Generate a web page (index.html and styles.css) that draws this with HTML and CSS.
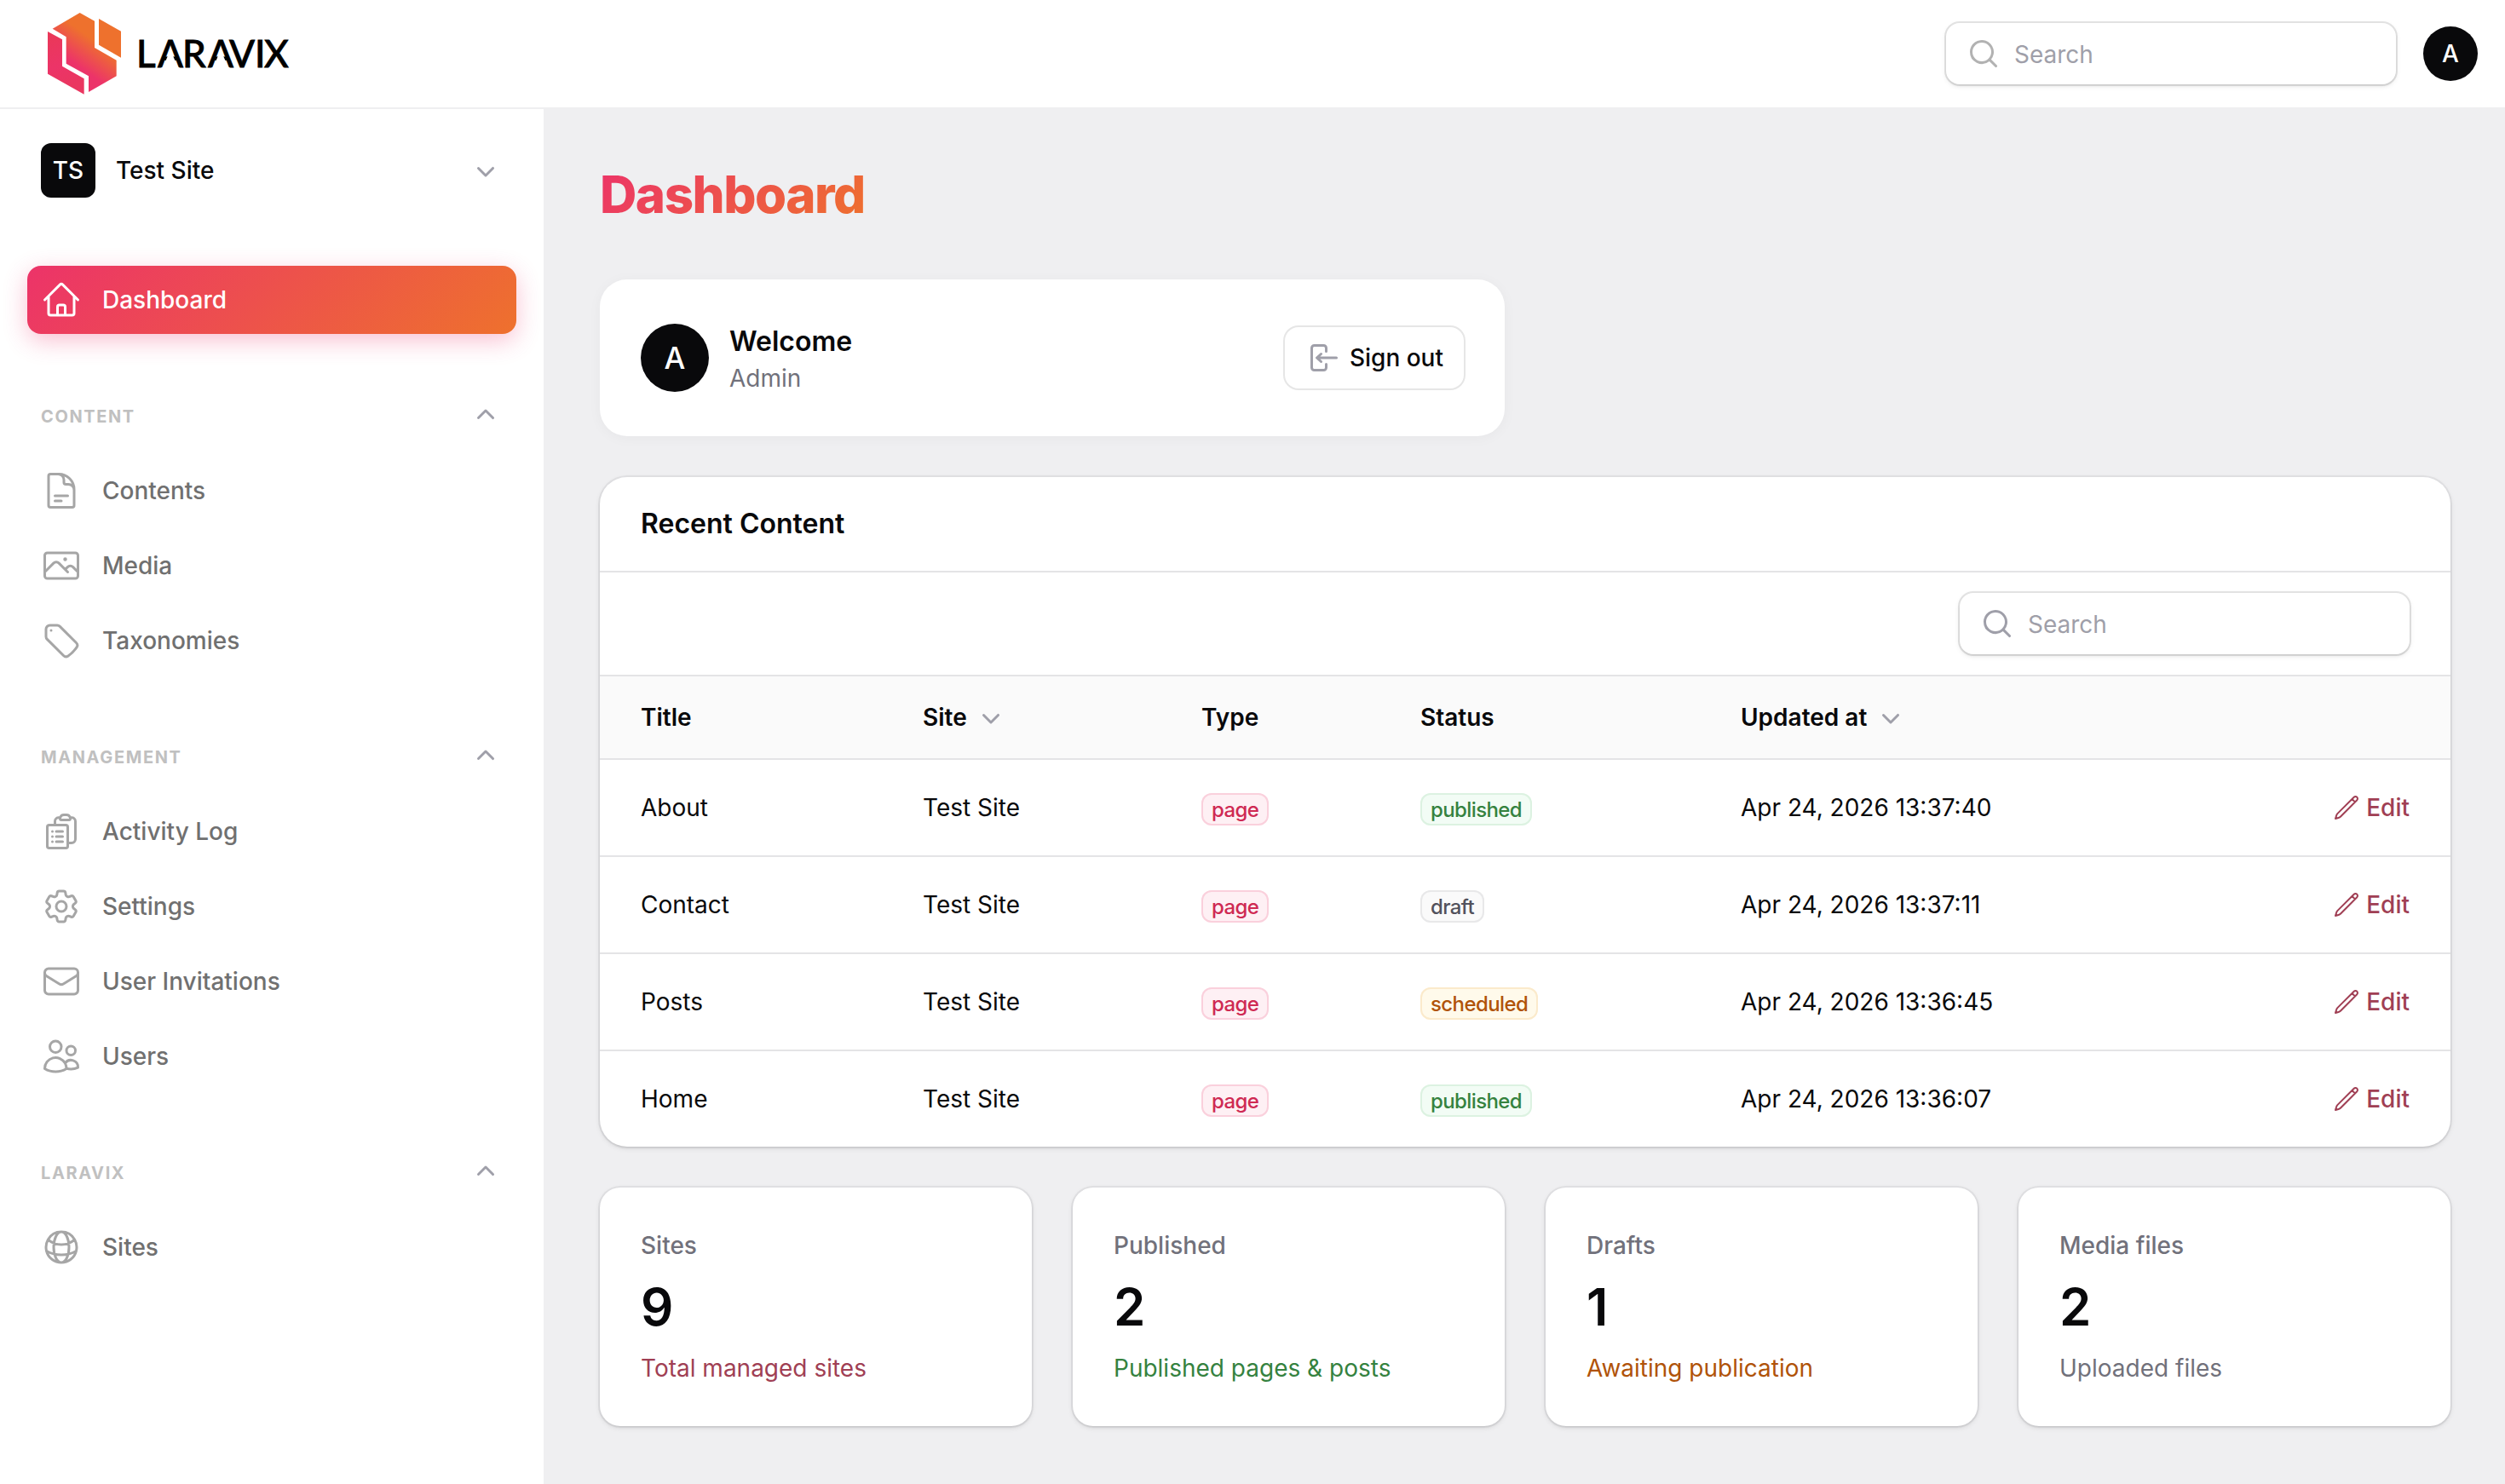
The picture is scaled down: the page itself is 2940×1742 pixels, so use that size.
FILE: index.html
```html
<!DOCTYPE html>
<html lang="en">
<head>
<meta charset="utf-8">
<title>Dashboard - Laravix</title>
<link rel="stylesheet" href="styles.css">
</head>
<body>
<svg class="sprite" aria-hidden="true">
  <symbol id="i-home" viewBox="0 0 24 24"><path d="m2.25 12 8.954-8.955c.44-.439 1.152-.439 1.591 0L21.75 12M4.5 9.75v10.125c0 .621.504 1.125 1.125 1.125H9.75v-4.875c0-.621.504-1.125 1.125-1.125h2.25c.621 0 1.125.504 1.125 1.125V21h4.125c.621 0 1.125-.504 1.125-1.125V9.75M8.25 21h8.25"/></symbol>
  <symbol id="i-document" viewBox="0 0 24 24"><path d="M19.5 14.25v-2.625a3.375 3.375 0 0 0-3.375-3.375h-1.5A1.125 1.125 0 0 1 13.5 7.125v-1.5a3.375 3.375 0 0 0-3.375-3.375H8.25m0 12.75h7.5m-7.5 3H12M10.5 2.25H5.625c-.621 0-1.125.504-1.125 1.125v17.25c0 .621.504 1.125 1.125 1.125h12.75c.621 0 1.125-.504 1.125-1.125V11.25a9 9 0 0 0-9-9Z"/></symbol>
  <symbol id="i-photo" viewBox="0 0 24 24"><path d="m2.25 15.75 5.159-5.159a2.25 2.25 0 0 1 3.182 0l5.159 5.159m-1.5-1.5 1.409-1.409a2.25 2.25 0 0 1 3.182 0l2.909 2.909m-18 3.75h16.5a1.5 1.5 0 0 0 1.5-1.5V6a1.5 1.5 0 0 0-1.5-1.5H3.75A1.5 1.5 0 0 0 2.25 6v12a1.5 1.5 0 0 0 1.5 1.5Zm10.5-11.25h.008v.008h-.008V8.25Zm.375 0a.375.375 0 1 1-.75 0 .375.375 0 0 1 .75 0Z"/></symbol>
  <symbol id="i-tag" viewBox="0 0 24 24"><path d="M9.568 3H5.25A2.25 2.25 0 0 0 3 5.25v4.318c0 .597.237 1.17.659 1.591l9.581 9.581c.699.699 1.78.872 2.607.33a18.095 18.095 0 0 0 5.223-5.223c.542-.827.369-1.908-.33-2.607L11.16 3.66A2.25 2.25 0 0 0 9.568 3Z"/><path d="M6 6h.008v.008H6V6Z"/></symbol>
  <symbol id="i-clipboard" viewBox="0 0 24 24"><path d="M9 12h3.75M9 15h3.75M9 18h3.75m3 .75H18a2.25 2.25 0 0 0 2.25-2.25V6.108c0-1.135-.845-2.098-1.976-2.192a48.424 48.424 0 0 0-1.123-.08m-5.801 0c-.065.21-.1.433-.1.664 0 .414.336.75.75.75h4.5a.75.75 0 0 0 .75-.75 2.25 2.25 0 0 0-.1-.664m-5.8 0A2.251 2.251 0 0 1 13.5 2.25H15c1.012 0 1.867.668 2.15 1.586m-5.8 0c-.376.023-.75.05-1.124.08C9.095 4.01 8.25 4.973 8.25 6.108V8.25m0 0H4.875c-.621 0-1.125.504-1.125 1.125v11.25c0 .621.504 1.125 1.125 1.125h9.75c.621 0 1.125-.504 1.125-1.125V9.375c0-.621-.504-1.125-1.125-1.125H8.25ZM6.75 12h.008v.008H6.75V12Zm0 3h.008v.008H6.75V15Zm0 3h.008v.008H6.75V18Z"/></symbol>
  <symbol id="i-cog" viewBox="0 0 24 24"><path d="M9.594 3.94c.09-.542.56-.94 1.11-.94h2.593c.55 0 1.02.398 1.11.94l.213 1.281c.063.374.313.686.645.87.074.04.147.083.22.127.325.196.72.257 1.075.124l1.217-.456a1.125 1.125 0 0 1 1.37.49l1.296 2.247a1.125 1.125 0 0 1-.26 1.431l-1.003.827c-.293.241-.438.613-.43.992a7.723 7.723 0 0 1 0 .255c-.008.378.137.75.43.991l1.004.827c.424.35.534.955.26 1.43l-1.298 2.247a1.125 1.125 0 0 1-1.369.491l-1.217-.456c-.355-.133-.75-.072-1.076.124a6.47 6.47 0 0 1-.22.128c-.331.183-.581.495-.644.869l-.213 1.281c-.09.543-.56.94-1.11.94h-2.594c-.55 0-1.019-.398-1.11-.94l-.213-1.281c-.062-.374-.312-.686-.644-.87a6.52 6.52 0 0 1-.22-.127c-.325-.196-.72-.257-1.076-.124l-1.217.456a1.125 1.125 0 0 1-1.369-.49l-1.297-2.247a1.125 1.125 0 0 1 .26-1.431l1.004-.827c.292-.24.437-.613.43-.991a6.932 6.932 0 0 1 0-.255c.007-.38-.138-.751-.43-.992l-1.004-.827a1.125 1.125 0 0 1-.26-1.43l1.297-2.247a1.125 1.125 0 0 1 1.37-.491l1.216.456c.356.133.751.072 1.076-.124.072-.044.146-.086.22-.128.332-.183.582-.495.644-.869l.214-1.28Z"/><path d="M15 12a3 3 0 1 1-6 0 3 3 0 0 1 6 0Z"/></symbol>
  <symbol id="i-envelope" viewBox="0 0 24 24"><path d="M21.75 6.75v10.5a2.25 2.25 0 0 1-2.25 2.25h-15a2.25 2.25 0 0 1-2.25-2.25V6.75m19.5 0A2.25 2.25 0 0 0 19.5 4.5h-15a2.25 2.25 0 0 0-2.25 2.25m19.5 0v.243a2.25 2.25 0 0 1-1.07 1.916l-7.5 4.615a2.25 2.25 0 0 1-2.36 0L3.32 8.91a2.25 2.25 0 0 1-1.07-1.916V6.75"/></symbol>
  <symbol id="i-users" viewBox="0 0 24 24"><path d="M15 19.128a9.38 9.38 0 0 0 2.625.372 9.337 9.337 0 0 0 4.121-.952 4.125 4.125 0 0 0-7.533-2.493M15 19.128v-.003c0-1.113-.285-2.16-.786-3.07M15 19.128v.106A12.318 12.318 0 0 1 8.624 21c-2.331 0-4.512-.645-6.374-1.766l-.001-.109a6.375 6.375 0 0 1 11.964-3.07M12 6.375a3.375 3.375 0 1 1-6.75 0 3.375 3.375 0 0 1 6.75 0Zm8.25 2.25a2.625 2.625 0 1 1-5.25 0 2.625 2.625 0 0 1 5.25 0Z"/></symbol>
  <symbol id="i-globe" viewBox="0 0 24 24"><path d="M12 21a9.004 9.004 0 0 0 8.716-6.747M12 21a9.004 9.004 0 0 1-8.716-6.747M12 21c2.485 0 4.5-4.03 4.5-9S14.485 3 12 3m0 18c-2.485 0-4.5-4.03-4.5-9S9.515 3 12 3m0 0a8.997 8.997 0 0 1 7.843 4.582M12 3a8.997 8.997 0 0 0-7.843 4.582m15.686 0A11.953 11.953 0 0 1 12 10.5c-2.998 0-5.74-1.1-7.843-2.918m15.686 0A8.959 8.959 0 0 1 21 12c0 .778-.099 1.533-.284 2.253m0 0A17.919 17.919 0 0 1 12 16.5c-3.162 0-6.133-.815-8.716-2.247m0 0A9.015 9.015 0 0 1 3 12c0-1.605.42-3.113 1.157-4.418"/></symbol>
  <symbol id="i-pencil" viewBox="0 0 24 24"><path d="m16.862 4.487 1.687-1.688a1.875 1.875 0 1 1 2.652 2.652L6.832 19.82a4.5 4.5 0 0 1-1.897 1.13l-2.685.8.8-2.685a4.5 4.5 0 0 1 1.13-1.897L16.863 4.487Zm0 0L19.5 7.125"/></symbol>
  <symbol id="i-search" viewBox="0 0 20 20"><path fill-rule="evenodd" d="M9 3.5a5.5 5.5 0 1 0 0 11 5.5 5.5 0 0 0 0-11ZM2 9a7 7 0 1 1 12.452 4.391l3.328 3.329a.75.75 0 1 1-1.06 1.06l-3.329-3.328A7 7 0 0 1 2 9Z"/></symbol>
  <symbol id="i-down" viewBox="0 0 20 20"><path d="M5.22 8.22a.75.75 0 0 1 1.06 0L10 11.94l3.72-3.72a.75.75 0 1 1 1.06 1.06l-4.25 4.25a.75.75 0 0 1-1.06 0L5.22 9.28a.75.75 0 0 1 0-1.06Z"/></symbol>
  <symbol id="i-up" viewBox="0 0 20 20"><path d="M9.47 6.47a.75.75 0 0 1 1.06 0l4.25 4.25a.75.75 0 1 1-1.06 1.06L10 8.06l-3.72 3.72a.75.75 0 0 1-1.06-1.06l4.25-4.25Z"/></symbol>
  <symbol id="i-signout" viewBox="0 0 20 20"><path d="M3 4.25A2.25 2.25 0 0 1 5.25 2h5.5A2.25 2.25 0 0 1 13 4.25v2a.75.75 0 0 1-1.5 0v-2a.75.75 0 0 0-.75-.75h-5.5a.75.75 0 0 0-.75.75v11.5c0 .414.336.75.75.75h5.5a.75.75 0 0 0 .75-.75v-2a.75.75 0 0 1 1.5 0v2A2.25 2.25 0 0 1 10.75 18h-5.5A2.25 2.25 0 0 1 3 15.75V4.25Z"/><path d="M19 10a.75.75 0 0 0-.75-.75H8.704l1.048-.943a.75.75 0 1 0-1.004-1.114l-2.5 2.25a.75.75 0 0 0 0 1.114l2.5 2.25a.75.75 0 1 0 1.004-1.114l-1.048-.943h9.546A.75.75 0 0 0 19 10Z"/></symbol>
</svg>

<header class="topbar">
  <a class="brand">
    <svg class="brand-mark" viewBox="48 45 258 288">
      <defs>
        <linearGradient id="brand-core" gradientUnits="userSpaceOnUse" x1="146" y1="226" x2="208" y2="140">
          <stop offset="0" stop-color="#ec3369"/><stop offset="1" stop-color="#ee712d"/>
        </linearGradient>
        <linearGradient id="brand-left" gradientUnits="userSpaceOnUse" x1="60" y1="120" x2="120" y2="300">
          <stop offset="0" stop-color="#ea3858"/><stop offset=".6" stop-color="#ec3468"/><stop offset="1" stop-color="#ea3660"/>
        </linearGradient>
      </defs>
      <path fill="url(#brand-left)" d="M48 111 99 139V233L176 277V332L48 260Z"/>
      <path fill="url(#brand-core)" d="M65 101 161 45 213 74V168L290 212V268L192 324V268L113 224V130Z"/>
      <path fill="#ee712d" d="M228 66 306 110V203L228 158Z"/>
    </svg>
    <svg class="brand-name" viewBox="0 0 176 40">
      <text x="-2 23 52 82 107 137 148" y="36">LARAVIX</text>
      <!-- open counters of the two A's -->
      <path fill="#fff" d="M38 16 47.5 37H28.5ZM97 16 106.5 37H87.5Z"/>
    </svg>
  </a>
  <div class="topbar-end">
    <label class="search search-top"><svg class="icon20"><use href="#i-search"/></svg><span>Search</span></label>
    <span class="avatar avatar-round">A</span>
  </div>
</header>

<div class="layout">
  <aside class="sidebar">
    <div class="tenant">
      <span class="avatar avatar-square">TS</span>
      <span class="tenant-name">Test Site</span>
      <svg class="icon20 muted"><use href="#i-down"/></svg>
    </div>
    <nav class="nav">
      <div class="group">
        <a class="item active"><svg class="icon24"><use href="#i-home"/></svg>Dashboard</a>
      </div>
      <div class="group">
        <div class="group-head"><span>CONTENT</span><svg class="icon20 muted"><use href="#i-up"/></svg></div>
        <a class="item"><svg class="icon24"><use href="#i-document"/></svg>Contents</a>
        <a class="item"><svg class="icon24"><use href="#i-photo"/></svg>Media</a>
        <a class="item"><svg class="icon24"><use href="#i-tag"/></svg>Taxonomies</a>
      </div>
      <div class="group">
        <div class="group-head"><span>MANAGEMENT</span><svg class="icon20 muted"><use href="#i-up"/></svg></div>
        <a class="item"><svg class="icon24"><use href="#i-clipboard"/></svg>Activity Log</a>
        <a class="item"><svg class="icon24"><use href="#i-cog"/></svg>Settings</a>
        <a class="item"><svg class="icon24"><use href="#i-envelope"/></svg>User Invitations</a>
        <a class="item"><svg class="icon24"><use href="#i-users"/></svg>Users</a>
      </div>
      <div class="group">
        <div class="group-head"><span>LARAVIX</span><svg class="icon20 muted"><use href="#i-up"/></svg></div>
        <a class="item"><svg class="icon24"><use href="#i-globe"/></svg>Sites</a>
      </div>
    </nav>
  </aside>

  <main class="main">
    <h1 class="heading">Dashboard</h1>

    <div class="widgets">
      <section class="account">
        <span class="avatar avatar-round avatar-lg">A</span>
        <div class="account-text">
          <h2>Welcome</h2>
          <p>Admin</p>
        </div>
        <button class="btn" type="button"><svg class="icon20 muted"><use href="#i-signout"/></svg>Sign out</button>
      </section>

      <section class="card table-card">
        <h2 class="card-title">Recent Content</h2>
        <div class="toolbar">
          <label class="search"><svg class="icon20"><use href="#i-search"/></svg><span>Search</span></label>
        </div>
        <table class="table">
          <colgroup><col class="c-title"><col class="c-site"><col class="c-type"><col class="c-status"><col class="c-date"><col></colgroup>
          <thead>
            <tr>
              <th>Title</th>
              <th><span class="sort">Site<svg class="icon20 muted"><use href="#i-down"/></svg></span></th>
              <th>Type</th>
              <th>Status</th>
              <th><span class="sort">Updated at<svg class="icon20 muted"><use href="#i-down"/></svg></span></th>
              <th></th>
            </tr>
          </thead>
          <tbody>
            <tr><td>About</td><td>Test Site</td><td><span class="badge primary">page</span></td><td><span class="badge success">published</span></td><td>Apr 24, 2026 13:37:40</td><td><a class="edit"><svg class="icon16"><use href="#i-pencil"/></svg>Edit</a></td></tr>
            <tr><td>Contact</td><td>Test Site</td><td><span class="badge primary">page</span></td><td><span class="badge gray">draft</span></td><td>Apr 24, 2026 13:37:11</td><td><a class="edit"><svg class="icon16"><use href="#i-pencil"/></svg>Edit</a></td></tr>
            <tr><td>Posts</td><td>Test Site</td><td><span class="badge primary">page</span></td><td><span class="badge warning">scheduled</span></td><td>Apr 24, 2026 13:36:45</td><td><a class="edit"><svg class="icon16"><use href="#i-pencil"/></svg>Edit</a></td></tr>
            <tr><td>Home</td><td>Test Site</td><td><span class="badge primary">page</span></td><td><span class="badge success">published</span></td><td>Apr 24, 2026 13:36:07</td><td><a class="edit"><svg class="icon16"><use href="#i-pencil"/></svg>Edit</a></td></tr>
          </tbody>
        </table>
      </section>

      <div class="stats">
        <section class="card stat"><span class="stat-label">Sites</span><span class="stat-value">9</span><span class="stat-note note-primary">Total managed sites</span></section>
        <section class="card stat"><span class="stat-label">Published</span><span class="stat-value">2</span><span class="stat-note note-success">Published pages &amp; posts</span></section>
        <section class="card stat"><span class="stat-label">Drafts</span><span class="stat-value">1</span><span class="stat-note note-warning">Awaiting publication</span></section>
        <section class="card stat"><span class="stat-label">Media files</span><span class="stat-value">2</span><span class="stat-note">Uploaded files</span></section>
      </div>
    </div>
  </main>
</div>
</body>
</html>
```
FILE: styles.css
```css
* { box-sizing: border-box; }

body {
  margin: 0;
  min-height: 1742px;
  display: flex;
  flex-direction: column;
  background: #efeff1;
  color: #09090b;
  font-family: "Inter", "Liberation Sans", sans-serif;
  font-size: 28px;
  line-height: 40px;
}

h1, h2, p { margin: 0; }

.sprite { display: none; }

.icon24 { width: 48px; height: 48px; flex: none; fill: none; stroke: currentColor; stroke-width: 1.5; stroke-linecap: round; stroke-linejoin: round; }
.icon20 { width: 40px; height: 40px; flex: none; fill: currentColor; }
.icon16 { width: 32px; height: 32px; flex: none; fill: none; stroke: currentColor; stroke-width: 1.5; stroke-linecap: round; stroke-linejoin: round; }
.muted { color: #9f9fa9; }

/* Top bar */
.topbar {
  height: 128px;
  flex: none;
  display: flex;
  align-items: center;
  justify-content: space-between;
  padding: 0 32px 0 56px;
  background: #fff;
  border-bottom: 2px solid #efeff1;
}
.brand { display: flex; align-items: center; gap: 20px; }
.brand-mark { width: 86px; height: 96px; }
.brand-name { width: 176px; height: 40px; overflow: visible; }
.brand-name text { font-family: "Lato", "Inter", sans-serif; font-size: 44px; font-weight: 500; fill: #000; stroke: #000; stroke-width: .8; }
.topbar-end { display: flex; align-items: center; gap: 32px; }

.search {
  width: 528px;
  height: 72px;
  display: flex;
  align-items: center;
  gap: 16px;
  padding: 0 24px;
  border-radius: 16px;
  background: #fff;
  color: #9f9fa9;
  box-shadow: 0 0 0 2px rgba(9, 9, 11, .1), 0 2px 6px rgba(0, 0, 0, .1), 0 2px 4px -2px rgba(0, 0, 0, .1);
}
.search span { padding-top: 2px; }
.search-top .icon20 { color: #b2b2b2; }

.avatar {
  width: 64px;
  height: 64px;
  flex: none;
  display: flex;
  align-items: center;
  justify-content: center;
  background: #09090b;
  color: #fff;
  font-weight: 500;
}
.avatar-round { border-radius: 50%; }
.avatar-square { border-radius: 12px; }
.avatar-lg { width: 80px; height: 80px; font-size: 35px; }

.layout { flex: 1; display: flex; }

/* Sidebar */
.sidebar {
  width: 640px;
  flex: none;
  padding: 24px 32px 0;
  background: #fff;
  border-right: 2px solid #efeff1;
}
.tenant { display: flex; align-items: center; gap: 24px; padding: 16px; }
.tenant-name { flex: 1; font-weight: 500; }
.nav { display: flex; flex-direction: column; gap: 56px; margin-top: 64px; }
.group { display: flex; flex-direction: column; gap: 8px; }
.group-head {
  height: 80px;
  display: flex;
  align-items: center;
  justify-content: space-between;
  padding: 0 16px;
  color: #c0c0c0;
  font-size: 20px;
  font-weight: 700;
  letter-spacing: 1.6px;
}
.group-head span { padding-top: 2px; }
.item {
  height: 80px;
  display: flex;
  align-items: center;
  gap: 24px;
  padding: 0 16px;
  border-radius: 16px;
  color: #707070;
  font-weight: 500;
}
.item .icon24 { color: #a6a6a6; }
.item.active {
  color: #fff;
  background: linear-gradient(135deg, #ec3369, #ee712d);
  box-shadow: 0 8px 28px rgba(236, 51, 105, .3);
}
.item.active .icon24 { color: #fff; }

/* Page */
.main { flex: 1; padding: 64px; }
.heading {
  width: fit-content;
  font-size: 60px;
  line-height: 72px;
  font-weight: 800;
  letter-spacing: -1.5px;
  color: transparent;
  background: linear-gradient(135deg, #ec3369, #ee712d);
  background-clip: text;
  -webkit-background-clip: text;
}
.widgets { display: flex; flex-direction: column; gap: 48px; margin-top: 64px; }

.account {
  width: 1062px;
  height: 184px;
  display: flex;
  align-items: center;
  gap: 24px;
  padding: 0 48px;
  border-radius: 32px;
  background: #fff;
  box-shadow: 0 2px 16px rgba(0, 0, 0, .04);
}
.account-text { flex: 1; padding-top: 1px; }
.account-text h2 { font-size: 32px; line-height: 48px; font-weight: 600; }
.account-text p { margin-top: -1px; color: #71717b; }
.btn {
  height: 72px;
  display: flex;
  align-items: center;
  gap: 12px;
  padding: 0 24px;
  border: 0;
  border-radius: 16px;
  background: #fff;
  color: #09090b;
  font: 500 28px/40px "Inter", sans-serif;
  box-shadow: 0 0 0 2px rgba(9, 9, 11, .1);
}

.card {
  background: #fff;
  box-shadow: 0 0 0 2px rgba(9, 9, 11, .05), 0 2px 6px rgba(0, 0, 0, .1), 0 2px 4px -2px rgba(0, 0, 0, .1);
}
.table-card { border-radius: 32px; overflow: hidden; }
.card-title { padding: 31px 48px; font-size: 32px; line-height: 48px; font-weight: 600; }
.toolbar {
  display: flex;
  justify-content: flex-end;
  height: 122px;
  padding: 24px 48px;
  border-top: 2px solid #e4e4e6;
}

.table { width: 100%; table-layout: fixed; border-collapse: separate; border-spacing: 0; }
.c-title { width: 355px; }
.c-site { width: 327px; }
.c-type { width: 257px; }
.c-status { width: 376px; }
.c-date { width: 480px; }
.table th, .table td { padding: 0 24px; border-top: 2px solid #e4e4e6; text-align: left; white-space: nowrap; vertical-align: middle; }
.table th:first-child, .table td:first-child { padding-left: 48px; }
.table th:last-child, .table td:last-child { padding-right: 48px; }
.table th { height: 98px; background: #fafafa; font-weight: 600; }
.table td { height: 114px; }
.sort { display: flex; align-items: center; gap: 8px; }

.badge {
  width: fit-content;
  height: 38px;
  display: flex;
  align-items: center;
  margin-top: 4px;
  padding: 2px 12px 0;
  border-radius: 12px;
  font-size: 24px;
  line-height: 36px;
  font-weight: 500;
  letter-spacing: -.6px;
}
.badge.primary { color: #cf2a53; background: #fef0f4; box-shadow: inset 0 0 0 2px #fad0dc; }
.badge.success { color: #35823f; background: #f2fcf5; box-shadow: inset 0 0 0 2px #dcf2e1; }
.badge.gray { color: #52525c; background: #fafafa; box-shadow: inset 0 0 0 2px #e8e8e9; }
.badge.warning { color: #b05309; background: #fffaeb; box-shadow: inset 0 0 0 2px #fbeacb; }

.edit { display: flex; align-items: center; justify-content: flex-end; gap: 7px; color: #a03f54; font-weight: 500; }

/* Stats */
.stats { display: grid; grid-template-columns: repeat(4, 1fr); gap: 48px; }
.stat { display: flex; flex-direction: column; gap: 16px; padding: 48px; border-radius: 24px; }
.stat-label { color: #71717b; font-weight: 500; }
.stat-value { font-size: 60px; line-height: 72px; font-weight: 600; letter-spacing: -1.5px; }
.stat-note { color: #71717b; }
.note-primary { color: #a03f54; }
.note-success { color: #35823f; }
.note-warning { color: #b05309; }
```
